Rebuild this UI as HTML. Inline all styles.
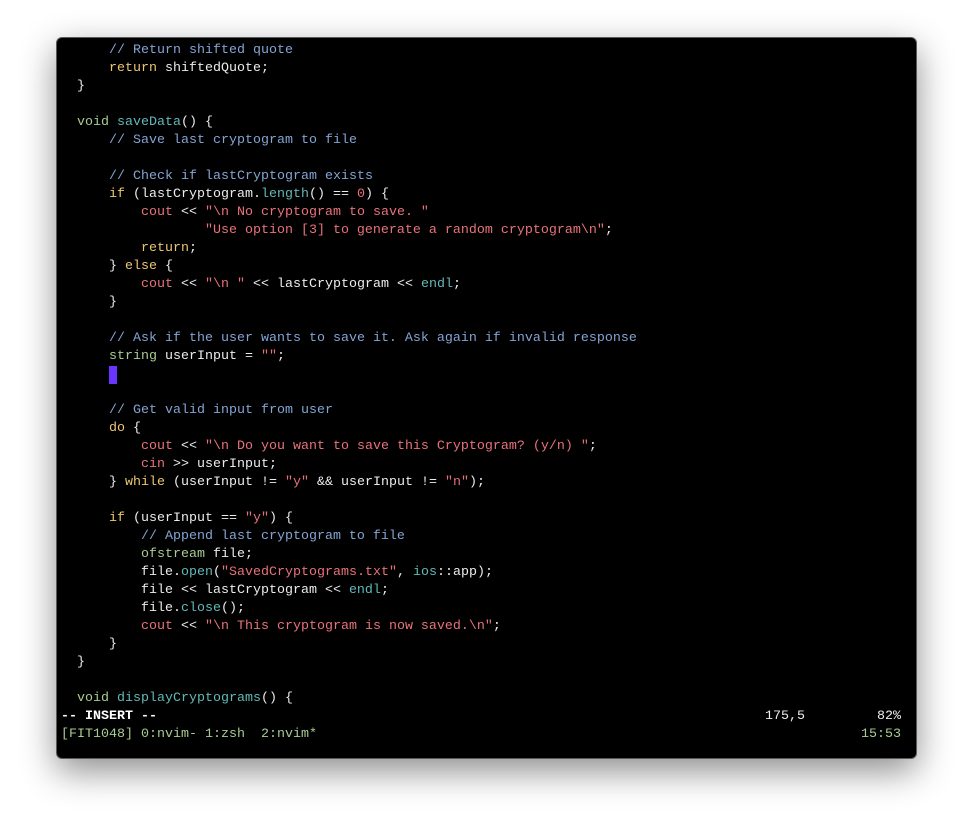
<!DOCTYPE html>
<html><head><meta charset="utf-8"><style>
html,body{margin:0;padding:0;background:#fff;width:972px;height:832px;overflow:hidden}
.win{position:absolute;left:56px;top:37px;width:859px;height:720px;background:#000;border:1px solid #5a5a5a;border-radius:6px;box-shadow:0 12px 35px rgba(0,0,0,.45);overflow:hidden}
pre{position:absolute;left:4px;top:4px;margin:0;font-family:"Liberation Mono",monospace;font-size:13.33px;line-height:18px;color:#ececec;white-space:pre}
.c{color:#84a4d4}.k{color:#ecc672}.s{color:#e8727a}.f{color:#62b8b8}.t{color:#a8cc92}.g{color:#a8cc92}.b{font-weight:bold;color:#fff}
.cur{display:inline-block;width:8px;height:18px;background:#6a36ff;vertical-align:top}
.r{position:absolute;font-family:"Liberation Mono",monospace;font-size:13.33px;line-height:18px;color:#ececec}
</style></head><body><div class="win"><pre>      <span class="c">// Return shifted quote</span>
      <span class="k">return</span> shiftedQuote;
  }

  <span class="t">void</span> <span class="f">saveData</span>() {
      <span class="c">// Save last cryptogram to file</span>

      <span class="c">// Check if lastCryptogram exists</span>
      <span class="k">if</span> (lastCryptogram.<span class="f">length</span>() == <span class="s">0</span>) {
          <span class="s">cout</span> &lt;&lt; <span class="s">"\n No cryptogram to save. "</span>
                  <span class="s">"Use option [3] to generate a random cryptogram\n"</span>;
          <span class="k">return</span>;
      } <span class="k">else</span> {
          <span class="s">cout</span> &lt;&lt; <span class="s">"\n "</span> &lt;&lt; lastCryptogram &lt;&lt; <span class="f">endl</span>;
      }

      <span class="c">// Ask if the user wants to save it. Ask again if invalid response</span>
      <span class="t">string</span> userInput = <span class="s">""</span>;
      <span class="cur"></span>

      <span class="c">// Get valid input from user</span>
      <span class="k">do</span> {
          <span class="s">cout</span> &lt;&lt; <span class="s">"\n Do you want to save this Cryptogram? (y/n) "</span>;
          <span class="s">cin</span> &gt;&gt; userInput;
      } <span class="k">while</span> (userInput != <span class="s">"y"</span> &amp;&amp; userInput != <span class="s">"n"</span>);

      <span class="k">if</span> (userInput == <span class="s">"y"</span>) {
          <span class="c">// Append last cryptogram to file</span>
          <span class="t">ofstream</span> file;
          file.<span class="f">open</span>(<span class="s">"SavedCryptograms.txt"</span>, <span class="f">ios</span>::app);
          file &lt;&lt; lastCryptogram &lt;&lt; <span class="f">endl</span>;
          file.<span class="f">close</span>();
          <span class="s">cout</span> &lt;&lt; <span class="s">"\n This cryptogram is now saved.\n"</span>;
      }
  }

  <span class="t">void</span> <span class="f">displayCryptograms</span>() {
<span class="b">-- INSERT --</span>
<span class="g">[FIT1048] 0:nvim- 1:zsh  2:nvim*</span></pre>
<div class="r" style="left:708px;top:670px">175,5</div>
<div class="r" style="left:820px;top:670px">82%</div>
<div class="r g" style="left:804px;top:688px;color:#a8cc92">15:53</div>
</div></body></html>
